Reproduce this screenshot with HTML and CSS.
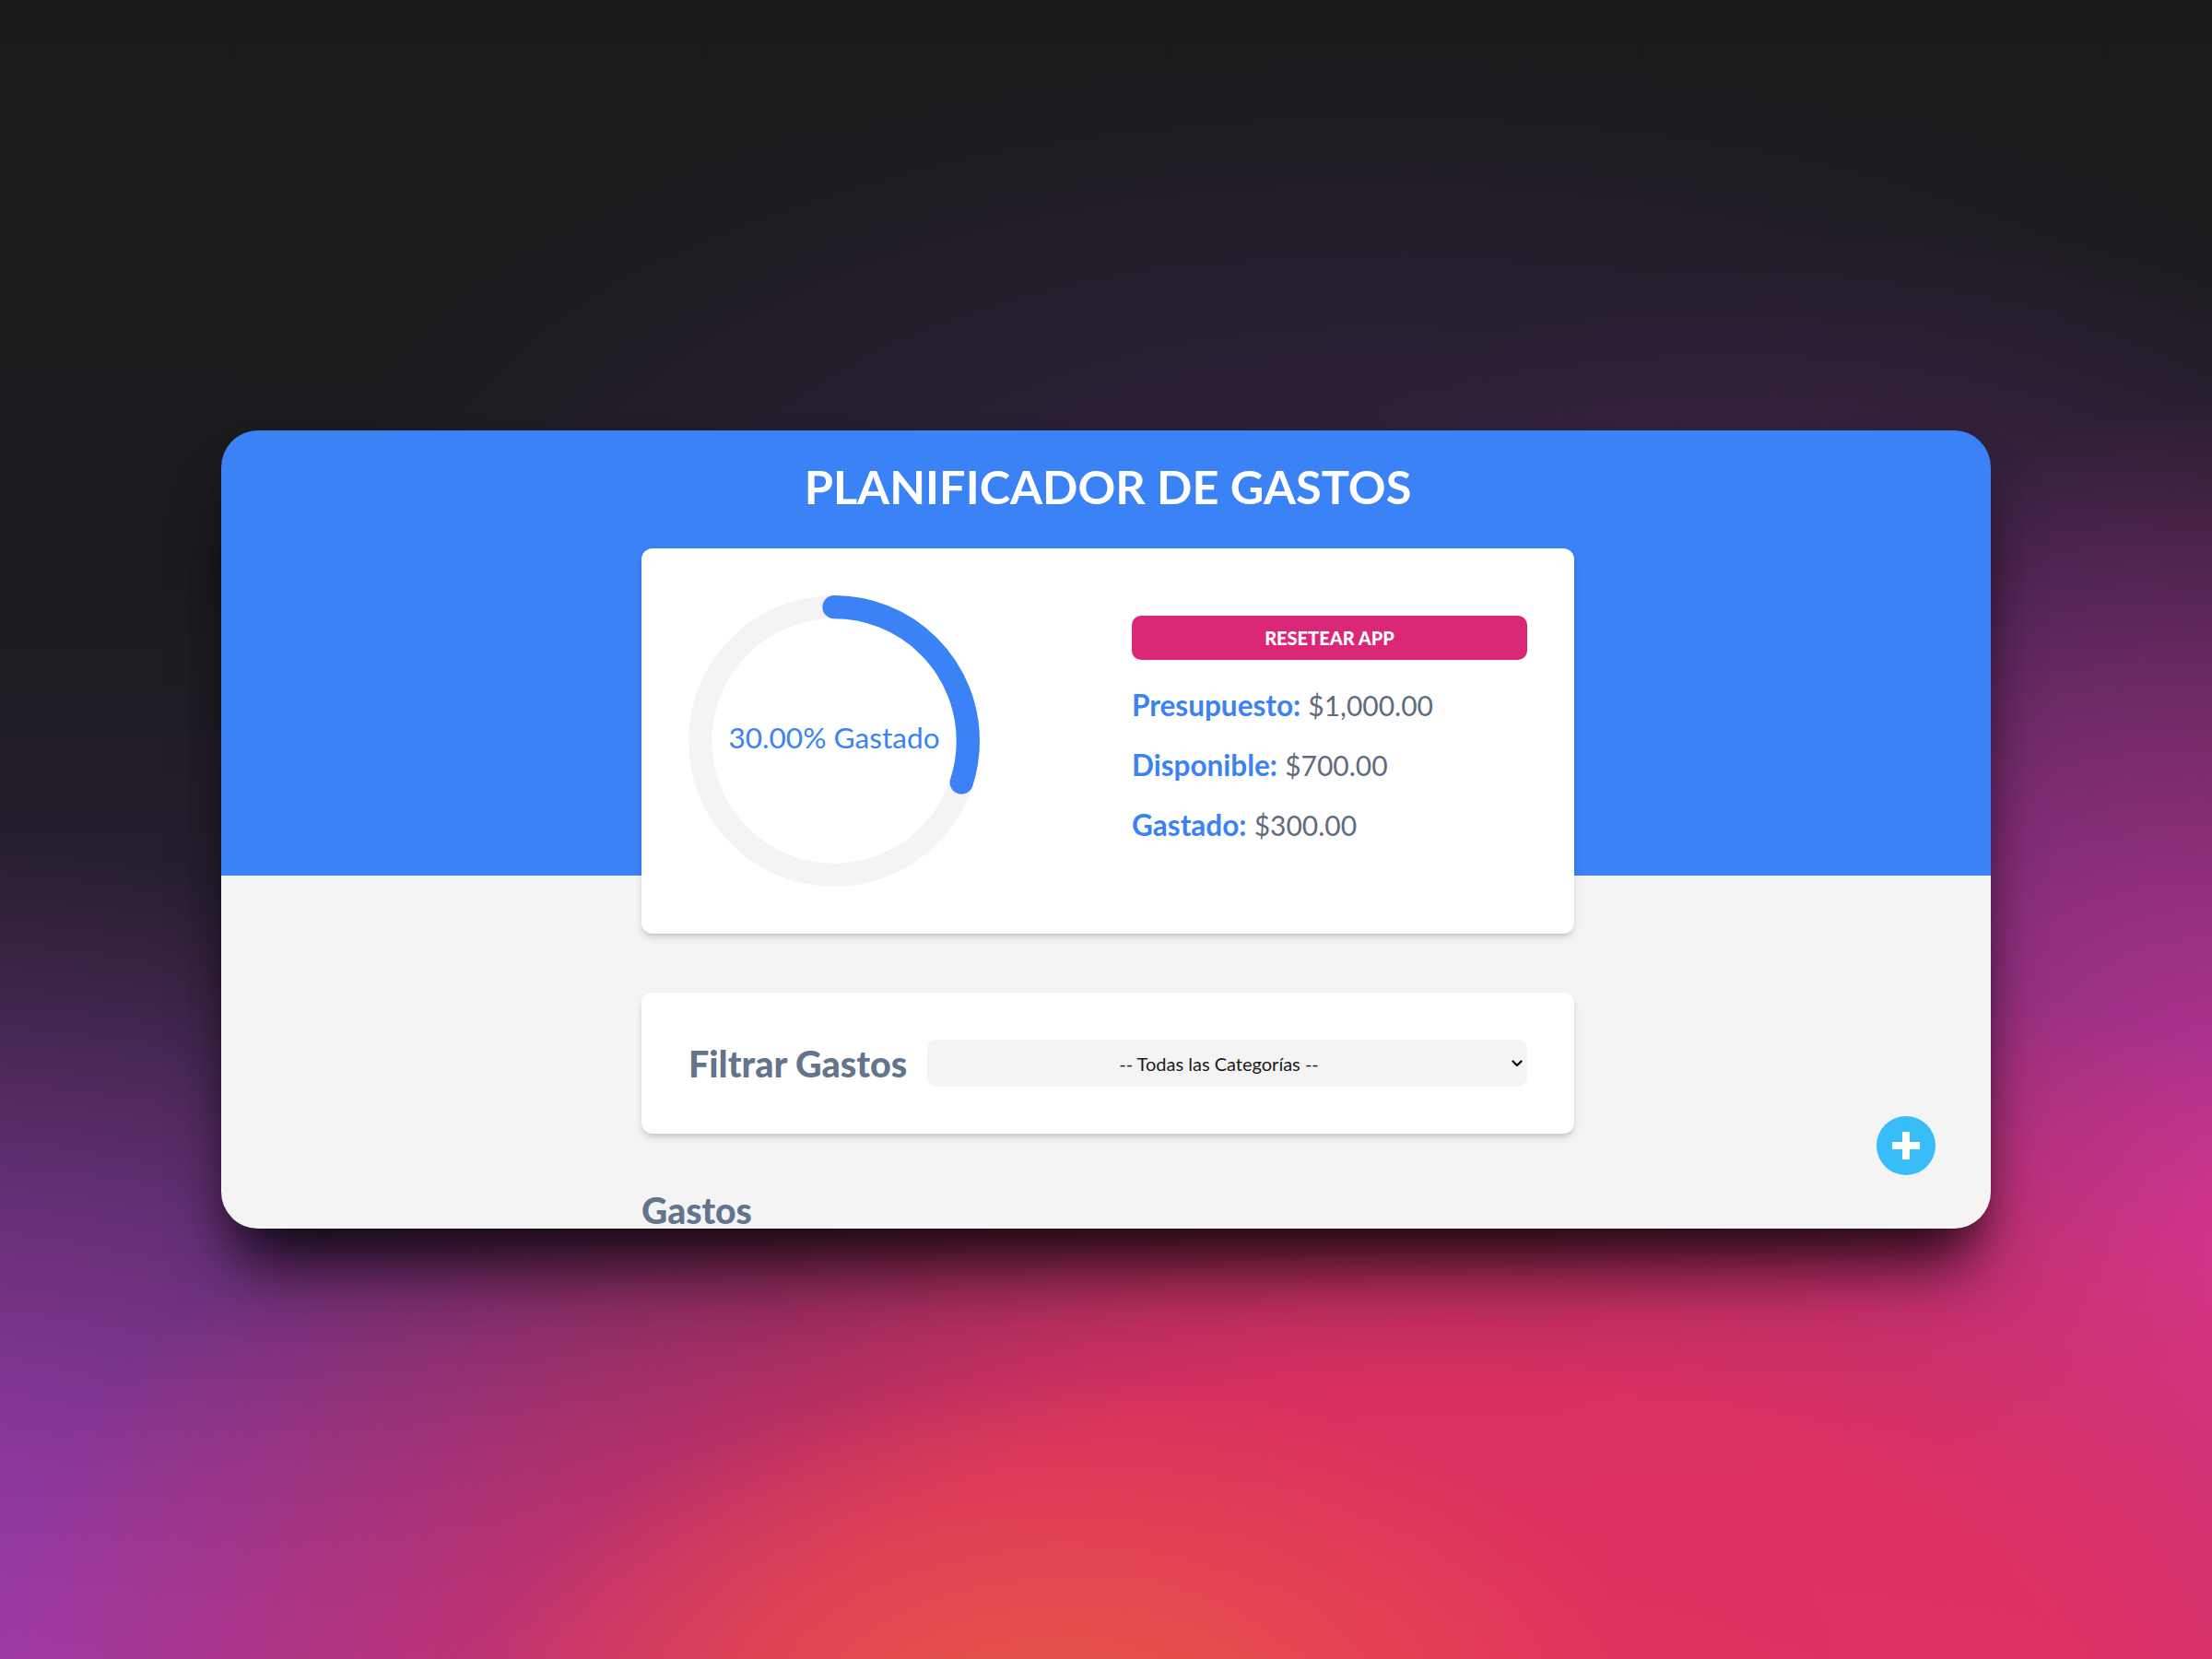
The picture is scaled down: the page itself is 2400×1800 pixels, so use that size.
FILE: index.html
```html
<!DOCTYPE html>
<html lang="es">
<head>
<meta charset="utf-8">
<title>Planificador de Gastos</title>
<link rel="stylesheet" href="styles.css">
</head>
<body>
  <div class="window">
    <div class="column">
      <h1 class="title">PLANIFICADOR DE GASTOS</h1>

      <section class="card summary">
        <div class="chart">
          <svg class="progress" viewBox="0 0 100 100" width="316" height="316">
            <circle class="trail" cx="50" cy="50" r="46"></circle>
            <circle class="path" cx="50" cy="50" r="46" transform="rotate(-90 50 50)" stroke-dasharray="289.03 289.03" stroke-dashoffset="202.32"></circle>
            <text class="progress-text" x="50" y="50">30.00% Gastado</text>
          </svg>
        </div>
        <div class="info">
          <button class="reset" type="button">RESETEAR APP</button>
          <p class="stat"><span class="stat-label">Presupuesto:</span> <span class="stat-value">$1,000.00</span></p>
          <p class="stat"><span class="stat-label">Disponible:</span> <span class="stat-value">$700.00</span></p>
          <p class="stat"><span class="stat-label">Gastado:</span> <span class="stat-value">$300.00</span></p>
        </div>
      </section>

      <section class="card filter">
        <label class="filter-label" for="categoria">Filtrar Gastos</label>
        <div class="select-wrap">
          <select id="categoria" class="select">
            <option>-- Todas las Categorías --</option>
          </select>
          <svg class="chevron" viewBox="0 0 12 8" width="12" height="8">
            <path d="M1.5 1.5 L6 6 L10.5 1.5" fill="none" stroke="#111" stroke-width="2.4" stroke-linecap="round" stroke-linejoin="round"></path>
          </svg>
        </div>
      </section>

      <h2 class="list-title">Gastos</h2>
    </div>

    <button class="fab" type="button" aria-label="Nuevo gasto">
      <svg viewBox="0 0 64 64" width="64" height="64">
        <circle cx="32" cy="32" r="32" fill="#38bdf8"></circle>
        <rect x="17" y="28" width="30" height="8" fill="#ffffff"></rect>
        <rect x="28" y="17" width="8" height="30" fill="#ffffff"></rect>
      </svg>
    </button>
  </div>
</body>
</html>
```

FILE: styles.css
```css
* {
  box-sizing: border-box;
}

html, body {
  margin: 0;
  width: 2400px;
  height: 1800px;
  overflow: hidden;
}

body {
  font-family: Lato, "Noto Sans", sans-serif;
  padding-top: 467px;
  padding-left: 240px;
  background-color: #1b1b1d;
  background-image:
    radial-gradient(ellipse 650px 380px at 1150px 1870px, rgba(232, 92, 66, 0.9), rgba(232, 92, 66, 0) 100%),
    radial-gradient(ellipse 1600px 900px at 1550px 1900px, rgba(228, 48, 94, 1) 0%, rgba(228, 48, 94, 0.9) 45%, rgba(228, 48, 94, 0) 100%),
    radial-gradient(ellipse 800px 950px at 2460px 1380px, rgba(210, 55, 160, 1) 0%, rgba(210, 55, 160, 0) 100%),
    radial-gradient(ellipse 900px 750px at 2100px 1000px, rgba(110, 45, 130, 0.55), rgba(110, 45, 130, 0) 100%),
    radial-gradient(ellipse 1100px 1000px at -100px 1900px, rgba(160, 60, 175, 1), rgba(160, 60, 175, 0) 100%),
    radial-gradient(ellipse 1200px 600px at 1500px 650px, rgba(72, 40, 96, 0.55), rgba(72, 40, 96, 0) 100%),
    linear-gradient(180deg, #1b1b1d 0%, #1c1b1f 35%, #2a2035 60%, #4a2a5e 80%, #7a3280 100%);
}

.window {
  position: relative;
  width: 1920px;
  height: 866px;
  border-radius: 40px;
  overflow: hidden;
  background: linear-gradient(180deg, #3b82f6 0, #3b82f6 483px, #f4f4f4 483px, #f4f4f4 100%);
  box-shadow: 0 60px 70px -20px rgba(0, 0, 0, 0.7), 0 20px 40px -10px rgba(0, 0, 0, 0.35);
}

.column {
  width: 1012px;
  margin-left: 456px;
  padding-top: 31px;
}

.title {
  margin: 0;
  font-size: 50.5px;
  line-height: 60px;
  font-weight: 700;
  color: #ffffff;
  text-align: center;
}

.card {
  background: #ffffff;
  border-radius: 12px;
  box-shadow: 0 5px 8px -1px rgba(0, 0, 0, 0.14), 0 3px 5px -2px rgba(0, 0, 0, 0.1);
}

.summary {
  margin-top: 37px;
  padding: 51px;
  display: grid;
  grid-template-columns: 429px 429px;
  column-gap: 52px;
}

.chart {
  width: 316px;
  height: 316px;
}

.progress {
  display: block;
}

.trail {
  fill: none;
  stroke: #f4f4f4;
  stroke-width: 8;
}

.path {
  fill: none;
  stroke: #3b82f6;
  stroke-width: 8;
  stroke-linecap: round;
}

.progress-text {
  font-family: Lato, "Noto Sans", sans-serif;
  font-size: 10px;
  fill: #3b82f6;
  text-anchor: middle;
  dominant-baseline: middle;
}

.info {
  padding-top: 22px;
}

.reset {
  display: block;
  width: 100%;
  height: 48px;
  border: none;
  border-radius: 10px;
  background: #db2777;
  color: #ffffff;
  font-family: Lato, "Noto Sans", sans-serif;
  font-size: 20px;
  font-weight: 900;
  cursor: pointer;
}

.stat {
  margin: 25px 0 0;
  font-size: 32px;
  line-height: 40px;
  color: #5f6b7e;
}

.stat:first-of-type {
  margin-top: 29px;
}

.stat-label {
  font-weight: 700;
  color: #3b82f6;
  font-size: 31.5px;
}

.stat-value {
  font-weight: 400;
  font-size: 30px;
}

.filter {
  margin-top: 64px;
  padding: 51px;
  display: flex;
  align-items: center;
}

.filter-label {
  flex: 1;
  font-size: 39.5px;
  line-height: 51px;
  font-weight: 900;
  color: #64748b;
}

.select-wrap {
  position: relative;
  width: 651px;
  height: 51px;
}

.select {
  display: block;
  width: 100%;
  height: 100%;
  appearance: none;
  -webkit-appearance: none;
  border: none;
  border-radius: 10px;
  background: #f4f4f4;
  padding: 0 18px 0 0;
  font-family: Lato, "Noto Sans", sans-serif;
  font-size: 20px;
  color: #1a1a1a;
  text-align: center;
  text-align-last: center;
}

.chevron {
  position: absolute;
  right: 5px;
  top: 22px;
  width: 12px;
  height: 8px;
  pointer-events: none;
}

.list-title {
  margin: 60px 0 0;
  font-size: 39px;
  line-height: 47px;
  font-weight: 900;
  color: #64748b;
}

.fab {
  position: absolute;
  right: 60px;
  bottom: 58px;
  width: 64px;
  height: 64px;
  padding: 0;
  border: none;
  background: none;
  cursor: pointer;
}

.fab svg {
  display: block;
}
```
